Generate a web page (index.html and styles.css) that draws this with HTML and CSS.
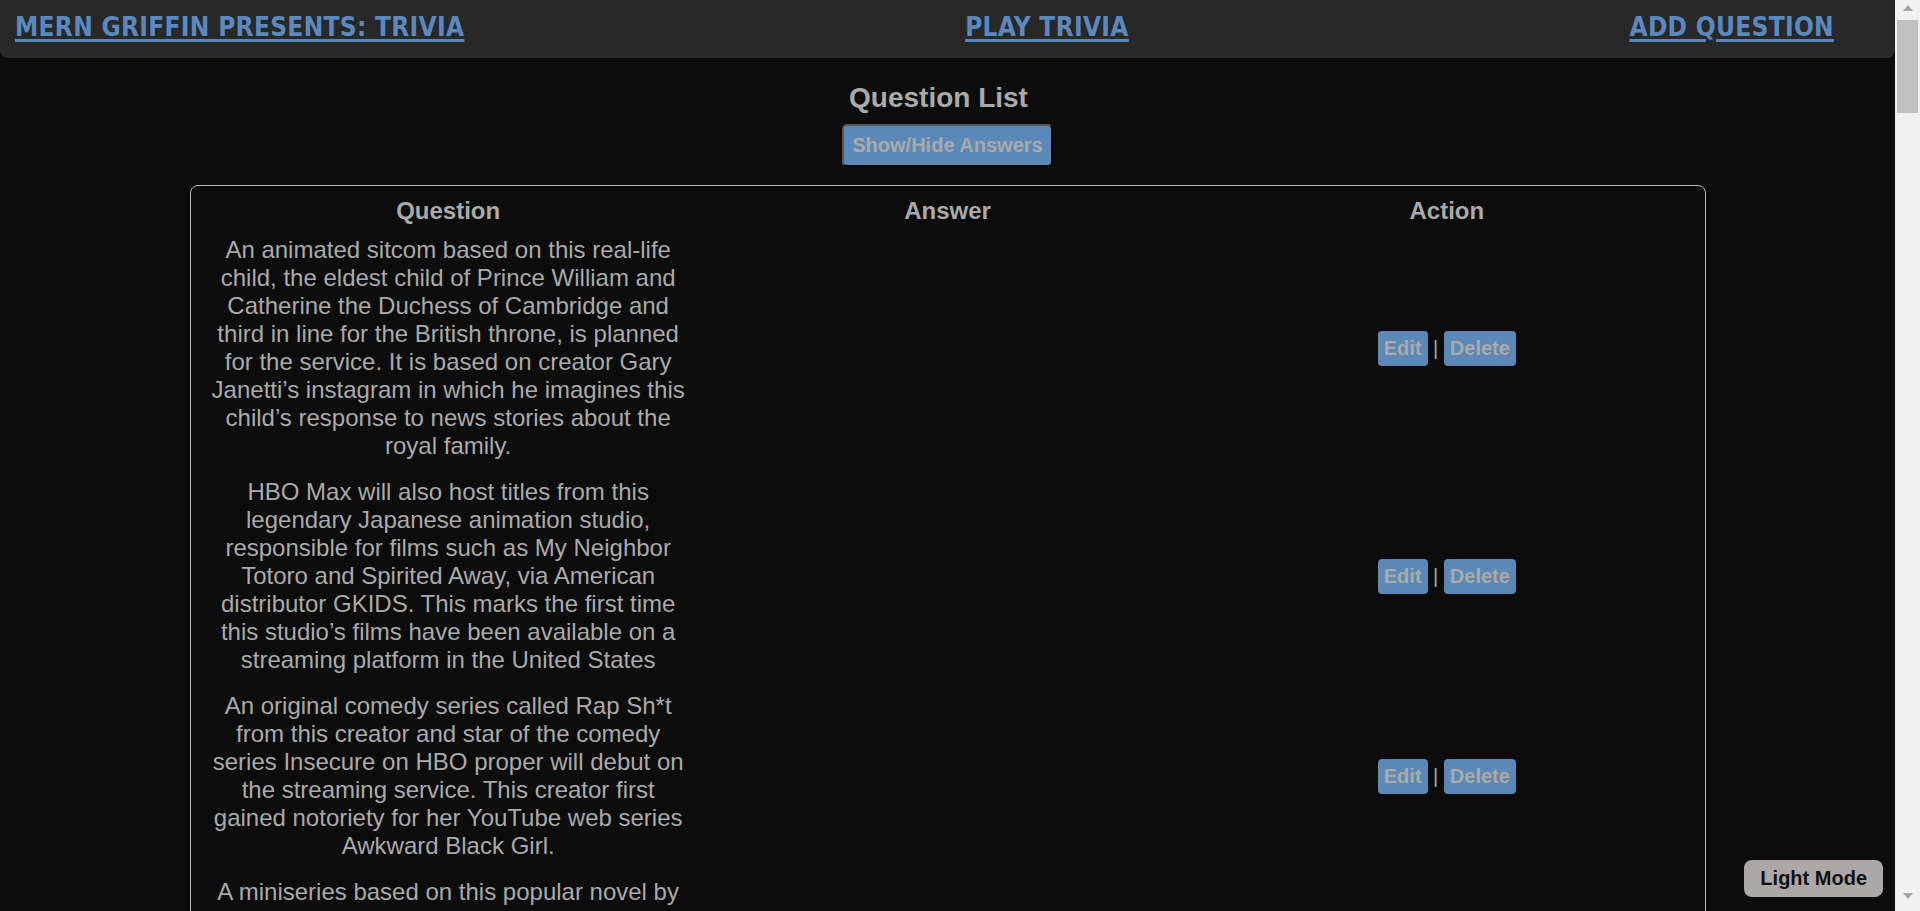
FILE: index.html
```html
<!DOCTYPE html>
<html lang="en">
<head>
<meta charset="utf-8">
<title>Mern Griffin Presents: Trivia</title>
<link rel="stylesheet" href="styles.css">
</head>
<body>
<nav class="topnav">
  <a href="#" class="nav-link">MERN GRIFFIN PRESENTS: TRIVIA</a>
  <a href="#" class="nav-link">PLAY TRIVIA</a>
  <a href="#" class="nav-link">ADD QUESTION</a>
</nav>
<main class="page">
  <h2 class="page-title">Question List</h2>
  <button class="toggle-btn">Show/Hide Answers</button>
  <div class="list-box">
    <table class="q-table">
      <thead>
        <tr><th>Question</th><th>Answer</th><th>Action</th></tr>
      </thead>
      <tbody>
        <tr>
          <td>An animated sitcom based on this real-life child, the eldest child of Prince William and Catherine the Duchess of Cambridge and third in line for the British throne, is planned for the service. It is based on creator Gary Janetti’s instagram in which he imagines this child’s response to news stories about the royal family.</td>
          <td></td>
          <td class="actions"><button class="act-btn">Edit</button> | <button class="act-btn">Delete</button></td>
        </tr>
        <tr>
          <td>HBO Max will also host titles from this legendary Japanese animation studio, responsible for films such as My Neighbor Totoro and Spirited Away, via American distributor GKIDS. This marks the first time this studio’s films have been available on a streaming platform in the United States</td>
          <td></td>
          <td class="actions"><button class="act-btn">Edit</button> | <button class="act-btn">Delete</button></td>
        </tr>
        <tr>
          <td>An original comedy series called Rap Sh*t from this creator and star of the comedy series Insecure on HBO proper will debut on the streaming service. This creator first gained notoriety for her YouTube web series Awkward Black Girl.</td>
          <td></td>
          <td class="actions"><button class="act-btn">Edit</button> | <button class="act-btn">Delete</button></td>
        </tr>
        <tr>
          <td>A miniseries based on this popular novel by Audrey Niffenegger, about a librarian with a genetic disorder that causes him to travel through time unpredictably, is in development for the service with Steven Moffat as writer.</td>
          <td></td>
          <td class="actions"><button class="act-btn">Edit</button> | <button class="act-btn">Delete</button></td>
        </tr>
        <tr>
          <td>The streaming service secured exclusive rights to all 236 episodes of this beloved NBC sitcom about six friends living in Manhattan, reportedly paying $425 million for the privilege.</td>
          <td></td>
          <td class="actions"><button class="act-btn">Edit</button> | <button class="act-btn">Delete</button></td>
        </tr>
        <tr>
          <td>HBO Max is owned by this telecommunications company, which acquired Time Warner in 2018 in a deal valued at more than $85 billion.</td>
          <td></td>
          <td class="actions"><button class="act-btn">Edit</button> | <button class="act-btn">Delete</button></td>
        </tr>
        <tr>
          <td>The Not-Too-Late Show, a talk show for kids featuring celebrity guests, is hosted by this red furry Muppet from Sesame Street.</td>
          <td></td>
          <td class="actions"><button class="act-btn">Edit</button> | <button class="act-btn">Delete</button></td>
        </tr>
        <tr>
          <td>The voguing competition series Legendary, in which houses battle it out in the ballroom scene, counts this actress from The Good Place among its judges.</td>
          <td></td>
          <td class="actions"><button class="act-btn">Edit</button> | <button class="act-btn">Delete</button></td>
        </tr>
        <tr>
          <td>Love Life, an anthology romantic comedy series, stars this actress known for playing Beca in the Pitch Perfect films.</td>
          <td></td>
          <td class="actions"><button class="act-btn">Edit</button> | <button class="act-btn">Delete</button></td>
        </tr>
        <tr>
          <td>The monthly subscription price of the service was revealed at a 2019 investor event to be this amount, the same price as HBO Now.</td>
          <td></td>
          <td class="actions"><button class="act-btn">Edit</button> | <button class="act-btn">Delete</button></td>
        </tr>
        <tr>
          <td>Craftopia, a crafting competition series for kids, is hosted by this YouTube personality, known online for her do-it-yourself videos.</td>
          <td></td>
          <td class="actions"><button class="act-btn">Edit</button> | <button class="act-btn">Delete</button></td>
        </tr>
        <tr>
          <td>A curated hub of classic films, including Casablanca and The Wizard of Oz, comes to the service from this cable network devoted to old Hollywood.</td>
          <td></td>
          <td class="actions"><button class="act-btn">Edit</button> | <button class="act-btn">Delete</button></td>
        </tr>
        <tr>
          <td>After a long fan campaign, a director’s cut of this 2017 DC Comics superhero team-up film was announced for release on the service.</td>
          <td></td>
          <td class="actions"><button class="act-btn">Edit</button> | <button class="act-btn">Delete</button></td>
        </tr>
        <tr>
          <td>All twelve seasons of this CBS sitcom about a group of scientists at Caltech, created by Chuck Lorre and Bill Prady, stream exclusively on the service.</td>
          <td></td>
          <td class="actions"><button class="act-btn">Edit</button> | <button class="act-btn">Delete</button></td>
        </tr>
        <tr>
          <td>This star of that CBS sitcom leads the original series The Flight Attendant as a woman who wakes up next to a dead body in a Bangkok hotel room.</td>
          <td></td>
          <td class="actions"><button class="act-btn">Edit</button> | <button class="act-btn">Delete</button></td>
        </tr>
        <tr>
          <td>Search Party, a dark comedy series starring Alia Shawkat, moved to the service from this cable network for its third season.</td>
          <td></td>
          <td class="actions"><button class="act-btn">Edit</button> | <button class="act-btn">Delete</button></td>
        </tr>
        <tr>
          <td>This director of Alien and Blade Runner executive produces Raised by Wolves, a series about androids raising human children on a distant planet.</td>
          <td></td>
          <td class="actions"><button class="act-btn">Edit</button> | <button class="act-btn">Delete</button></td>
        </tr>
        <tr>
          <td>New shorts starring Bugs Bunny, Daffy Duck and Porky Pig debut on the service under the banner of this classic Warner Bros. animated franchise.</td>
          <td></td>
          <td class="actions"><button class="act-btn">Edit</button> | <button class="act-btn">Delete</button></td>
        </tr>
        <tr>
          <td>This Emmy-winning Adult Swim series, following a cynical scientist and his grandson across the multiverse, streams on the service alongside other Cartoon Network titles.</td>
          <td></td>
          <td class="actions"><button class="act-btn">Edit</button> | <button class="act-btn">Delete</button></td>
        </tr>
        <tr>
          <td>A reunion special for that NBC sitcom, featuring stars Jennifer Aniston, Courteney Cox and Matthew Perry, was planned as a launch title but was delayed by the pandemic.</td>
          <td></td>
          <td class="actions"><button class="act-btn">Edit</button> | <button class="act-btn">Delete</button></td>
        </tr>
        <tr>
          <td>On the Record, a documentary about allegations against this music mogul and Def Jam co-founder, was acquired by the service after Oprah Winfrey withdrew from the project.</td>
          <td></td>
          <td class="actions"><button class="act-btn">Edit</button> | <button class="act-btn">Delete</button></td>
        </tr>
        <tr>
          <td>The service launched in the United States on this date in 2020, one year after it was first announced by WarnerMedia.</td>
          <td></td>
          <td class="actions"><button class="act-btn">Edit</button> | <button class="act-btn">Delete</button></td>
        </tr>
      </tbody>
    </table>
  </div>
</main>
<button class="mode-btn">Light Mode</button>
<div class="scrollbar" aria-hidden="true">
  <span class="sb-arrow sb-arrow-up"></span>
  <span class="sb-thumb"></span>
  <span class="sb-arrow sb-arrow-down"></span>
</div>
</body>
</html>
```

FILE: styles.css
```css
html {
  background: #0c0c0c;
}

body {
  margin: 0 25px 0 0;
  background: #0c0c0c;
  color: #aaa;
  font-family: "Liberation Sans", Arial, sans-serif;
}

.topnav {
  display: flex;
  justify-content: space-between;
  align-items: flex-start;
  height: 58px;
  box-sizing: border-box;
  padding: 12px 61px 0 15px;
  background: #282828;
  border-radius: 0 0 8px 8px;
}

.nav-link {
  font-family: "DejaVu Sans Condensed", "Liberation Sans Narrow", "DejaVu Sans", sans-serif;
  font-stretch: condensed;
  font-weight: bold;
  font-size: 26px;
  line-height: 30px;
  letter-spacing: 0.3px;
  color: #5a89c0;
  text-decoration: underline;
  text-decoration-thickness: 3px;
  text-underline-offset: 3px;
}

.page {
  display: flex;
  flex-direction: column;
  align-items: center;
  padding-top: 24px;
}

.page-title {
  margin: 0;
  padding-right: 18px;
  font-size: 28px;
  line-height: 32px;
  font-weight: bold;
}

.toggle-btn {
  margin-top: 10px;
  font-family: "Liberation Sans", Arial, sans-serif;
  font-weight: bold;
  font-size: 20px;
  line-height: 23px;
  color: #aaa;
  background: #5b88b6;
  padding: 8px;
  border: 2px solid;
  border-color: #555 #000 #000 #555;
  border-radius: 5px;
}

.list-box {
  margin-top: 18px;
  width: 80%;
  box-sizing: border-box;
  border: 1px solid #bbb;
  border-radius: 8px;
  padding: 8px 7px;
}

.q-table {
  width: 100%;
  table-layout: fixed;
  border-spacing: 2px;
  font-size: 24px;
  line-height: 28px;
  color: #aaa;
}

.q-table th {
  padding: 1px;
  font-weight: bold;
}

.q-table td {
  padding: 8px;
  text-align: center;
  vertical-align: middle;
}

.q-table td.actions {
  font-size: 20px;
}

.act-btn {
  font-family: "Liberation Sans", Arial, sans-serif;
  font-weight: bold;
  font-size: 20px;
  line-height: 23px;
  color: #aaa;
  background: #5b88b6;
  border: none;
  border-radius: 4px;
  padding: 6px;
}

.mode-btn {
  position: fixed;
  right: 37px;
  bottom: 14px;
  font-family: "Liberation Sans", Arial, sans-serif;
  font-weight: bold;
  font-size: 20px;
  line-height: 23px;
  color: #111;
  background: #ada8a8;
  border: none;
  border-radius: 8px;
  padding: 7px 16px;
}

/* decorative replica of the browser's vertical scrollbar */
.scrollbar {
  position: fixed;
  top: 0;
  right: 0;
  width: 25px;
  height: 100vh;
  background: #f1f1f1;
  display: flex;
  flex-direction: column;
  align-items: center;
}

.sb-arrow {
  width: 0;
  height: 0;
  border-left: 5.5px solid transparent;
  border-right: 5.5px solid transparent;
}

.sb-arrow-up {
  margin-top: 5px;
  border-bottom: 6px solid #a3a3a3;
}

.sb-thumb {
  margin-top: 9px;
  width: 21px;
  height: 93px;
  background: #c1c1c1;
}

.sb-arrow-down {
  margin-top: auto;
  margin-bottom: 12px;
  border-top: 6px solid #a3a3a3;
}
```
